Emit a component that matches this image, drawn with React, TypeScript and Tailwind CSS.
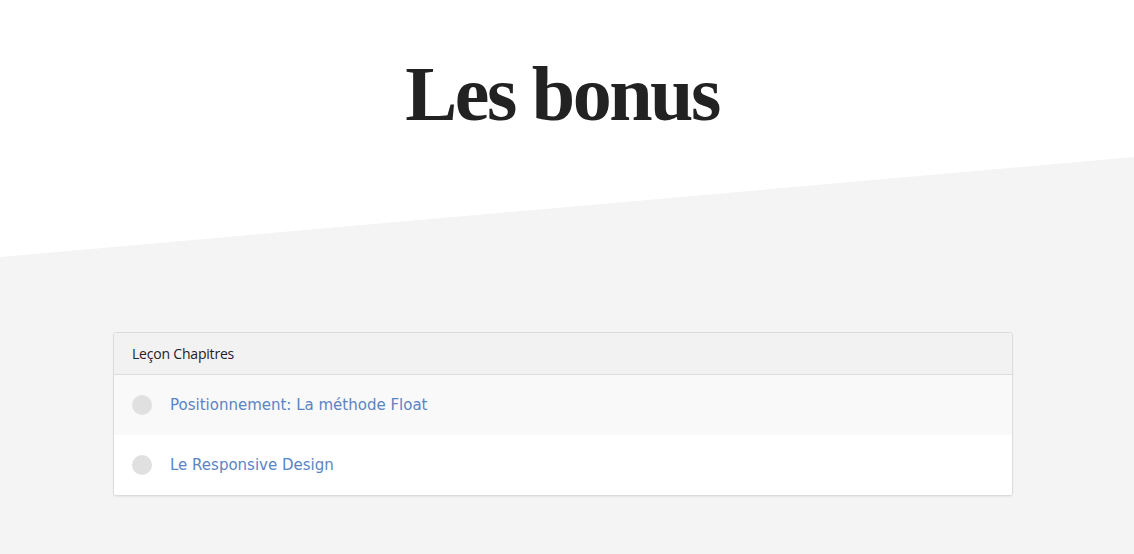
export default function App() {
  const rows = [
    { title: "Positionnement: La méthode Float", bg: "bg-[#f9f9f9]" },
    { title: "Le Responsive Design", bg: "bg-white" },
  ];
  return (
    <div className="w-[1134px] h-[554px] overflow-hidden bg-[#f4f4f4] flex flex-col">
      <div className="bg-white h-[157px] flex justify-center pt-[49px] pr-[10px]">
        <h1 className="text-[78px] leading-[90px] font-bold text-[#222] font-['Liberation_Serif',serif] tracking-[-2.5px]">
          Les bonus
        </h1>
      </div>
      <svg width="1134" height="100" viewBox="0 0 1134 100" preserveAspectRatio="none" className="block shrink-0">
        <rect x="0" y="0" width="1134" height="100" fill="#ffffff" />
        <polygon points="0,100 1134,0 1134,100" fill="#f4f4f4" />
      </svg>
      <div className="pt-[75px] pl-[113px]">
        <div className="w-[900px] rounded-[3px] border border-[#dcdcdc] bg-white overflow-hidden shadow-[0_1px_2px_rgba(0,0,0,0.06)]">
          <div className="h-[42px] bg-[#f2f2f2] border-b border-[#dcdcdc] flex items-center px-[18px] text-[14px] tracking-[-0.2px] text-[#222] font-['Open_Sans',sans-serif]">
            Leçon Chapitres
          </div>
          {rows.map((r) => (
            <div key={r.title} className={`h-[60px] flex items-center px-[18px] ${r.bg}`}>
              <span className="w-[20px] h-[20px] rounded-full bg-[#e0e0e0] shrink-0" />
              <span className="ml-[18px] text-[15px] text-[#5b84c4] font-['DejaVu_Sans',sans-serif]">
                {r.title}
              </span>
            </div>
          ))}
        </div>
      </div>
    </div>
  );
}
